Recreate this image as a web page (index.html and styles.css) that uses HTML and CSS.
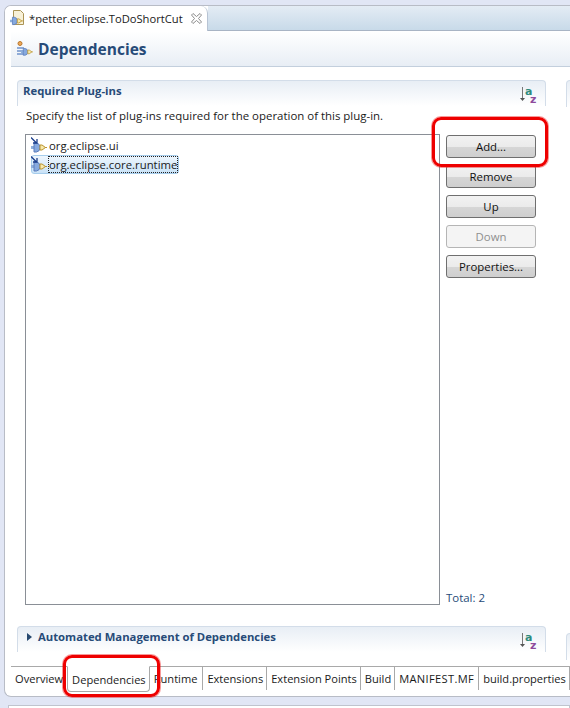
FILE: index.html
```html
<!DOCTYPE html>
<html lang="en">
<head>
    <meta charset="UTF-8">
    <title>petter.eclipse.ToDoShortCut</title>
    <link rel="stylesheet" href="styles.css">
</head>
<body>
    <svg width="0" height="0" class="defs">
        <symbol id="plug" viewBox="0 0 16 16">
            <path d="M0 8.500h3" stroke="#8fb0dc" stroke-width="3" fill="none"/>
            <path d="M3 4h2.500Q9 4.500 9 8.500T5.500 13H3z" fill="#86a9de" stroke="#5b7dbb"/>
            <path d="M9 6h2l3.500 2.500L11 11H9z" fill="#f7e9ad" stroke="#bb9430"/>
            <path d="M14 8.500h2" stroke="#bb9430"/>
        </symbol>
    </svg>

    <div class="editor">
        <div class="tabstrip">
            <div class="tab">
                <svg class="tab-icon" width="16" height="17" viewBox="0 0 16 17">
                    <path d="M3.500 .5h7l3 3v11h-10z" fill="#f8f1d8" stroke="#ab9455"/>
                    <use href="#plug" x="0" y="4" width="13" height="13"/>
                </svg>
                <span class="tab-title">*petter.eclipse.ToDoShortCut</span>
                <svg class="tab-close" width="11" height="11" viewBox="0 0 11 11">
                    <path d="M.5 2l1.500-1.500 3.500 3 3.500-3L10.500 2l-3 3.500 3 3.500L9 10.500l-3.500-3-3.500 3L.5 9l3-3.500z" fill="#fff" stroke="#8c8c8c"/>
                </svg>
            </div>
            <div class="tab-rest"></div>
        </div>

        <div class="form-header">
            <svg class="header-icon" width="16" height="16" viewBox="0 0 16 16">
                <circle cx="3" cy="2.500" r="2" fill="#eda95a" stroke="#b9772c"/>
                <path d="M0 7h7M0 10h7M0 13h7" stroke="#6f93cc" stroke-width="1.500"/>
                <use href="#plug" x="4" y="4.500" width="12" height="12"/>
            </svg>
            <h1>Dependencies</h1>
        </div>

        <div class="form-body">
            <div class="columns">
                <div class="section">
                    <div class="section-head">
                        <h2>Required Plug-ins</h2>
                        <svg class="sort-icon" viewBox="0 0 17 18">
                            <path d="M2.500 2v12" stroke="#777" fill="none"/>
                            <path d="M0 13h5l-2.500 3z" fill="#555"/>
                            <text x="5" y="9.500" class="sort-a">a</text>
                            <text x="10" y="17.500" class="sort-z">z</text>
                        </svg>
                    </div>
                    <p class="section-desc">Specify the list of plug-ins required for the operation of this plug-in.</p>
                    <div class="section-main">
                        <div class="plugin-list">
                            <div class="plugin-row">
                                <svg class="plugin-icon" width="16" height="16"><use href="#plug"/></svg>
                                <svg class="plugin-arrow" width="7" height="7" viewBox="0 0 7 7"><path d="M0 .5l5.500 5.500M6 2v4H2" stroke="#1c3f8c" stroke-width="1.300" fill="none"/></svg>
                                <span>org.eclipse.ui</span>
                            </div>
                            <div class="plugin-row selected">
                                <svg class="plugin-icon" width="16" height="16"><use href="#plug"/></svg>
                                <svg class="plugin-arrow" width="7" height="7" viewBox="0 0 7 7"><path d="M0 .5l5.500 5.500M6 2v4H2" stroke="#1c3f8c" stroke-width="1.300" fill="none"/></svg>
                                <span class="focus-text">org.eclipse.core.runtime</span>
                            </div>
                        </div>
                        <div class="side">
                            <div class="buttons">
                                <button>Add...</button>
                                <button>Remove</button>
                                <button>Up</button>
                                <button disabled>Down</button>
                                <button>Properties...</button>
                            </div>
                            <span class="total">Total: 2</span>
                        </div>
                    </div>
                </div>
                <div class="section-stub"></div>
            </div>

            <div class="columns columns-low">
                <div class="section section-closed">
                    <div class="section-head">
                        <h2><span class="twistie"></span>Automated Management of Dependencies</h2>
                        <svg class="sort-icon" viewBox="0 0 17 18">
                            <path d="M2.500 2v12" stroke="#777" fill="none"/>
                            <path d="M0 13h5l-2.500 3z" fill="#555"/>
                            <text x="5" y="9.500" class="sort-a">a</text>
                            <text x="10" y="17.500" class="sort-z">z</text>
                        </svg>
                    </div>
                </div>
                <div class="section-stub stub-low"></div>
            </div>
        </div>

        <div class="page-tabs">
            <span class="page-tab tab-overview">Overview</span>
            <span class="page-tab active">Dependencies</span>
            <span class="page-tab tab-runtime">Runtime</span>
            <span class="page-tab">Extensions</span>
            <span class="page-tab">Extension Points</span>
            <span class="page-tab">Build</span>
            <span class="page-tab tab-manifest">MANIFEST.MF</span>
            <span class="page-tab">build.properties</span>
        </div>
    </div>
    <div class="next-panel"></div>

    <!-- hand drawn marks from the screenshot -->
    <div class="mark mark-add"></div>
    <div class="mark mark-tab"></div>
</body>
</html>
```

FILE: styles.css
```css
html, body {
    height: 100%;
}
body {
    margin: 0;
    padding: 5px 0 0 4px;
    box-sizing: border-box;
    height: 708px;
    overflow: hidden;
    position: relative;
    background-color: #e1e6f5;
    font-family: "Open Sans", "Noto Sans", sans-serif;
    font-size: 11.45px;
    color: #1a1a1a;
}
.defs {
    position: absolute;
}
.editor {
    width: 580px;
    height: 692px;
    box-sizing: border-box;
    border: 1px solid #b8bcc6;
    border-right: none;
    border-radius: 7px 0 0 7px;
    background-color: white;
    display: flex;
    flex-direction: column;
    overflow: hidden;
}
.tabstrip {
    display: flex;
    height: 25px;
    flex-shrink: 0;
}
.tab {
    width: 203px;
    display: flex;
    align-items: center;
    box-sizing: border-box;
    padding: 0 0 0 5px;
    border-right: 1px solid #b8c4d4;
    border-top-right-radius: 7px;
    background-color: white;
}
.tab-icon {
    flex-shrink: 0;
}
.tab-title {
    margin-left: 3px;
    white-space: nowrap;
    font-size: 11.2px;
}
.tab-close {
    margin-left: 8px;
    flex-shrink: 0;
}
.tab-rest {
    flex-grow: 1;
    border-bottom: 1px solid #a8b4c4;
    background: linear-gradient(#e4ecf5, #c8dae9);
}
.form-header {
    margin-left: 6px;
    height: 36px;
    flex-shrink: 0;
    box-sizing: border-box;
    border-bottom: 1px solid #c3cfdd;
    background: linear-gradient(white, #e8eef5);
    display: flex;
    align-items: center;
    padding: 1px 0 0 6px;
}
.form-header h1 {
    margin: 0 0 0 5px;
    font-size: 15.5px;
    font-weight: 700;
    color: #274b78;
}
.form-body {
    flex-grow: 1;
    padding: 13px 0 0 12px;
    display: flex;
    flex-direction: column;
    overflow: hidden;
}
.columns {
    display: flex;
    gap: 20px;
}
.columns-low {
    margin-top: 21px;
}
.section {
    width: 529px;
    flex-shrink: 0;
}
.section-closed {
    height: 36px;
}
.section-head {
    height: 26px;
    box-sizing: border-box;
    padding: 0 8px 0 5px;
    border: 1px solid #d3dde9;
    border-bottom: none;
    border-radius: 4px 4px 0 0;
    background: linear-gradient(#e8eef5, white);
    display: flex;
    justify-content: space-between;
    align-items: flex-start;
}
.section-head h2 {
    margin: 0;
    padding-top: 1px;
    font-size: 11.3px;
    line-height: 17px;
    font-weight: 700;
    color: #274b78;
    display: flex;
    align-items: center;
}
.sort-icon {
    width: 17px;
    height: 18px;
    margin-top: 4px;
    overflow: visible;
}
.sort-a, .sort-z {
    font-family: "DejaVu Sans", sans-serif;
    font-size: 11px;
    font-weight: 700;
}
.sort-a {
    fill: #2f8a7c;
}
.sort-z {
    fill: #8e4a9c;
}
.twistie {
    width: 0;
    height: 0;
    margin: 0 6px 0 4px;
    border-left: 5px solid #27496f;
    border-top: 4px solid transparent;
    border-bottom: 4px solid transparent;
}
.section-desc {
    margin: 2px 0 0 9px;
    line-height: 16px;
}
.section-main {
    display: flex;
    margin: 10px 0 0 8px;
    height: 471px;
}
.plugin-list {
    width: 415px;
    box-sizing: border-box;
    border: 1px solid #8a8f96;
    padding: 1px 5px;
}
.plugin-row {
    height: 19px;
    display: flex;
    align-items: center;
    position: relative;
}
.plugin-icon {
    flex-shrink: 0;
    width: 16px;
    height: 16px;
    margin-top: 2px;
}
.plugin-arrow {
    position: absolute;
    left: 0;
    top: 1px;
}
.plugin-row span {
    margin-left: 2px;
    white-space: nowrap;
    font-size: 11.35px;
}
.selected {
    width: 148px;
    border: 1px solid #a6cdec;
    border-radius: 3px;
    box-sizing: border-box;
    background: linear-gradient(#eef6fd, #c9e2f7);
}
.selected .plugin-icon {
    margin-left: -1px;
}
.selected .plugin-arrow {
    left: -1px;
    top: 0;
}
.focus-text {
    outline: 1px dotted #222;
}
.side {
    flex-grow: 1;
    padding-left: 6px;
    display: flex;
    flex-direction: column;
    justify-content: space-between;
}
.buttons {
    margin-top: 1px;
    display: flex;
    flex-direction: column;
    gap: 7px;
}
.buttons button {
    width: 90px;
    height: 23px;
    padding: 0;
    border: 1px solid #6f6f6f;
    border-radius: 3px;
    background: linear-gradient(#f2f2f2 0, #ebebeb 50%, #d6d6d6 52%, #cfcfcf 100%);
    font-family: inherit;
    font-size: 11.4px;
    color: #111;
}
.buttons button:disabled {
    border-color: #b5b5b5;
    background: #f4f4f4;
    color: #8f8f8f;
}
.total {
    color: #274b78;
}
.section-stub {
    width: 40px;
    flex-shrink: 0;
    height: 26px;
    border: 1px solid #d3dde9;
    border-bottom: none;
    border-radius: 4px 0 0 0;
    background: linear-gradient(#e8eef5, white);
}
.stub-low {
    margin-top: 7px;
}
.page-tabs {
    height: 23px;
    flex-shrink: 0;
    margin: 0 0 6px 6px;
    border-top: 1px solid #a9a9a9;
    display: flex;
    font-size: 11.1px;
}
.page-tab {
    display: flex;
    align-items: center;
    padding: 0 3px 0 4px;
    border-right: 1px solid #a9a9a9;
    white-space: nowrap;
}
.tab-overview {
    padding-right: 2px;
    border-right: none;
}
.tab-runtime {
    padding-right: 5px;
}
.tab-manifest {
    padding-right: 4px;
    letter-spacing: .35px;
}
.page-tab.active {
    margin: -1px 0 0 2px;
    padding: 1px 3px 0 4px;
    height: 23px;
    border: 1px solid #a9a9a9;
    border-top-color: white;
    border-radius: 0 0 4px 4px;
}
.next-panel {
    margin: 8px 0 0 4px;
    height: 20px;
    border: 1px solid #c0c4ce;
    background-color: white;
}
.mark {
    position: absolute;
    box-sizing: border-box;
    border: 3px solid #ee0000;
    border-radius: 9px;
    box-shadow: 0 0 0 1px rgba(238, 0, 0, .4);
}
.mark-add {
    left: 432px;
    top: 117px;
    width: 116px;
    height: 50px;
}
.mark-tab {
    left: 63px;
    top: 655px;
    width: 97px;
    height: 42px;
}
```
